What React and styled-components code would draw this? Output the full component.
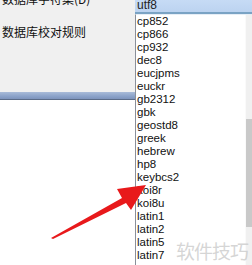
import React from 'react';
import styled, { createGlobalStyle } from 'styled-components';

const Global = createGlobalStyle`
  html, body { margin: 0; padding: 0; background: #fff; }
  body { font-family: "Liberation Sans", "Noto Sans CJK SC", sans-serif; }
`;

const Screen = styled.div`
  position: relative;
  width: 252px;
  height: 265px;
  overflow: hidden;
  display: grid;
  grid-template-columns: 135px 117px;
  background: #fff;
`;

const LeftCol = styled.div`
  display: flex;
  flex-direction: column;
`;

const Form = styled.div`
  height: 92px;
  background: #f0f0f0;
  display: flex;
  flex-direction: column;
  gap: 17px;
  padding-left: 2px;
  overflow: hidden;
`;

const Label = styled.div`
  font-family: "Noto Sans CJK SC", sans-serif;
  font-size: 12px;
  line-height: 16px;
  color: #111;
  white-space: nowrap;
  &:first-child { margin-top: -9px; }
`;

const Bar = styled.div`
  height: 7px;
  background: linear-gradient(#a9bbd8, #8ba2c9 60%, #7d93bb);
  border-bottom: 1px solid #5b6b87;
`;

const RightCol = styled.div`
  display: flex;
  flex-direction: column;
`;

const Combo = styled.div`
  height: 12px;
  background: linear-gradient(#c6dbf5, #bcd3f0);
  border-bottom: 2px solid #7aa3c4;
  font-size: 12px;
  line-height: 10px;
  padding-left: 2px;
  color: #222;
  overflow: hidden;
`;

const ListBox = styled.div`
  flex: 1;
  display: grid;
  grid-template-columns: 1fr 7px;
  border-left: 1px solid #8a8f99;
  border-top: 1px solid #e6eef6;
`;

const Items = styled.div`
  padding-left: 1px;
`;

const Item = styled.div`
  font-size: 11.5px;
  line-height: 13px;
  height: 13px;
  color: #111;
`;

const Track = styled.div`
  background: #f0f0f0;
  border-left: 1px solid #fafafa;
  display: flex;
  flex-direction: column;
`;

const Thumb = styled.div`
  margin-top: ${p => p.$top}px;
  height: ${p => p.$h}px;
  background: #c9c9c9;
`;

const Watermark = styled.div`
  position: absolute;
  left: 176px;
  top: 237px;
  font-family: "Noto Sans CJK SC", sans-serif;
  font-size: 19px;
  color: rgba(200, 200, 200, 0.75);
  letter-spacing: -1px;
  white-space: nowrap;
`;

const Arrow = styled.svg`
  position: absolute;
  left: 0;
  top: 0;
`;

const items = ['cp852', 'cp866', 'cp932', 'dec8', 'eucjpms', 'euckr', 'gb2312', 'gbk', 'geostd8', 'greek', 'hebrew', 'hp8', 'keybcs2', 'koi8r', 'koi8u', 'latin1', 'latin2', 'latin5', 'latin7'];

export default function App() {
  return (
    <>
      <Global />
      <Screen>
        <LeftCol>
          <Form>
            <Label>数据库字符集(D)</Label>
            <Label>数据库校对规则</Label>
          </Form>
          <Bar />
        </LeftCol>
        <RightCol>
          <Combo>utf8</Combo>
          <ListBox>
            <Items>
              {items.map(i => <Item key={i}>{i}</Item>)}
            </Items>
            <Track>
              <Thumb $top={104} $h={108} />
            </Track>
          </ListBox>
        </RightCol>
        <Watermark>软件技巧</Watermark>
        <Arrow width="252" height="265" viewBox="0 0 252 265">
          <polygon points="51,238 122,198 117,189 146,185 131,210 126,203 53,239" fill="#e8191b" />
        </Arrow>
      </Screen>
    </>
  );
}
